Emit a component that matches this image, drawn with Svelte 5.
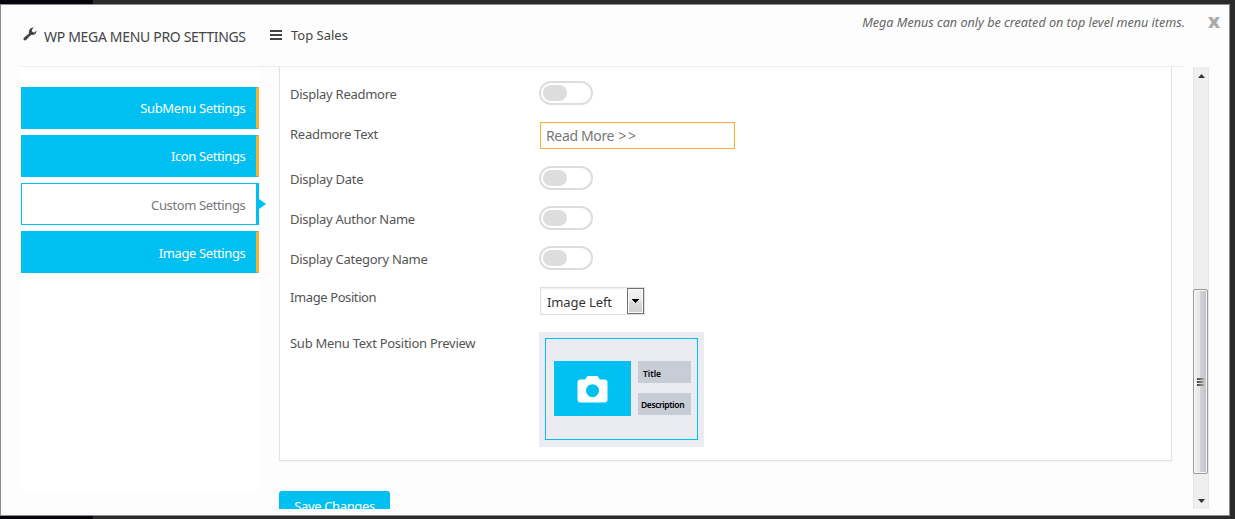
<script>
  const tabs = [
    { label: 'SubMenu Settings' },
    { label: 'Icon Settings' },
    { label: 'Custom Settings', active: true },
    { label: 'Image Settings' }
  ];
  const rows = [
    { label: 'Display Readmore', kind: 'toggle', cls: 'r41' },
    { label: 'Readmore Text', kind: 'input', cls: 'r44' },
    { label: 'Display Date', kind: 'toggle', cls: 'r40' },
    { label: 'Display Author Name', kind: 'toggle', cls: 'r40' },
    { label: 'Display Category Name', kind: 'toggle', cls: 'r41' },
    { label: 'Image Position', kind: 'choice', cls: 'r45' },
    { label: 'Sub Menu Text Position Preview', kind: 'layout', cls: 'r128' }
  ];
</script>

<div class="page">
  <div class="modal">
    <header>
      <svg class="wrench" viewBox="0 0 14 14" width="14" height="14"><path d="M.9 10.800 6 6.400C5.500 4.300 6.100 2.500 7.500 1.400 8.400.7 9.500.4 10.700.6L8.900 2.800l.4 2.100 2.100.5 2-1.900c.2 1.400-.3 2.700-1.300 3.600-1.200 1-2.700 1.200-4.200.8L3.100 13c-.6.6-1.600.6-2.200 0s-.6-1.600 0-2.200Z" fill="#444" /></svg>
      <span class="title">WP MEGA MENU PRO SETTINGS</span>
      <span class="burger"><i></i><i></i><i></i></span>
      <span class="item">Top Sales</span>
      <span class="note">Mega Menus can only be created on top level menu items.</span>
      <span class="close">x</span>
    </header>
    <div class="body">
      <nav>
        {#each tabs as t}
          <div class="tab" class:active={t.active}><span>{t.label}</span></div>
        {/each}
      </nav>
      <main>
        <section>
          {#each rows as r}
            <div class="row {r.cls}">
              <div class="label for-{r.kind}"><span>{r.label}</span></div>
              {#if r.kind === 'toggle'}
                <div class="switch"><b></b></div>
              {:else if r.kind === 'input'}
                <div class="field"><span>Read More <span class="arrows">&gt;&gt;</span></span></div>
              {:else if r.kind === 'choice'}
                <div class="select"><span>Image Left</span>
                  <div class="drop"><svg width="7" height="4" viewBox="0 0 7 4" shape-rendering="crispEdges"><path d="M0 0h7L3.500 4Z" /></svg></div>
                </div>
              {:else}
                <div class="preview">
                  <div class="frame">
                    <div class="photo">
                      <svg width="31" height="27" viewBox="0 0 31 27"><path fill="#fff" fill-rule="evenodd" d="M3.500 3.500h4.800l1.200-2.200Q10.200 0 11.500 0h8q1.300 0 2 1.300l1.200 2.200h4.800q3 0 3 3v17q0 3-3 3h-24q-3 0-3-3v-17q0-3 3-3ZM15.500 8.200a6.500 6.500 0 1 0 0 13 6.500 6.500 0 1 0 0-13Z" /></svg>
                    </div>
                    <div class="lines">
                      <div class="t"><span>Title</span></div>
                      <div class="d"><span>Description</span></div>
                    </div>
                  </div>
                </div>
              {/if}
            </div>
          {/each}
        </section>
        <button><span>Save Changes</span></button>
      </main>
      <aside>
        <svg class="up" width="7" height="4" viewBox="0 0 7 4"><path d="M0 4 3.500 0 7 4Z" fill="#333" /></svg>
        <div class="thumb"><i></i><i></i><i></i></div>
        <svg class="down" width="7" height="4" viewBox="0 0 7 4"><path d="M0 0h7L3.500 4Z" fill="#333" /></svg>
      </aside>
    </div>
  </div>
</div>

<style>
  :global(body) { margin: 0; overflow: hidden; }
  .page, .page * { box-sizing: border-box; }
  .page {
    width: 1235px; height: 519px; padding-top: 4px;
    background: linear-gradient(90deg, #04060a 93px, #2b2b2b 93px);
    font: 13px/18px "Noto Sans", "Open Sans", sans-serif; color: #555;
  }
  span { white-space: nowrap; }
  .modal {
    width: 1230px; height: 512px; border: 1px solid #8c8c8c;
    background: #fdfdfd; padding-left: 20px;
  }
  header {
    width: 1200px; height: 62px; display: flex; align-items: flex-start; color: #444;
    background: linear-gradient(#ebebeb, #ebebeb) 0 61px / 1164px 1px no-repeat;
  }
  .wrench { margin: 22px 0 0 2px; flex: none; }
  .title { width: 226px; margin: 23px 0 0 7px; font-size: 14px; letter-spacing: -.32px; }
  .burger { width: 12px; height: 10px; margin-top: 25px; display: flex; flex-direction: column; gap: 2px; }
  .burger i { height: 2px; background: #444; }
  .item { margin: 21px 0 0 9px; }
  .note { margin: 9px 0 0 auto; font-style: italic; color: #666; font-size: 12.600px; }
  .close { width: 13px; margin: 5px 0 0 23px; font-weight: 800; font-size: 20px; line-height: 22px; color: #aaa; }
  .body { height: 442px; display: flex; overflow: hidden; }
  nav { width: 238px; height: 424px; padding-top: 20px; background: #fff; display: flex; flex-direction: column; gap: 6px; flex: none; }
  .tab {
    position: relative; height: 42px; border: 1px solid #00c0f1; border-right: 3px solid #fbb034;
    background: #00c0f1; color: #fff; text-align: right; padding: 11px 10.600px 0 0; letter-spacing: -.38px;
  }
  .tab:last-child { padding-top: 12px; }
  .tab.active { background: #fff; color: #777; border-right-color: #00c0f1; padding-top: 12px; }
  .tab.active::after {
    content: ""; position: absolute; left: 100%; top: 15px; margin-left: 3px;
    border: 5px solid transparent; border-left: 7px solid #00c0f1; border-right: 0;
  }
  main { margin-left: 20px; width: 893px; flex: none; }
  section {
    height: 394px; padding: 14px 0 0 10px; background: #fff;
    border: 1px solid #e2e2e2; border-top: 0; box-shadow: 0 1px 1px rgba(0,0,0,.04);
  }
  .row { display: flex; align-items: flex-start; }
  .r40 { height: 40px; } .r41 { height: 41px; } .r44 { height: 44px; } .r45 { height: 45px; } .r128 { height: 128px; }
  .label { width: 249px; padding-top: 4px; flex: none; letter-spacing: -.27px; }
  .for-input { padding-top: 3px; }
  .for-choice { padding-top: 1px; letter-spacing: -.4px; }
  .for-layout { padding-top: 2px; }
  .switch { width: 54px; height: 24px; border: 2px solid #ddd; border-radius: 12px; padding: 2px; }
  .switch b { display: block; width: 24px; height: 16px; border-radius: 9px; background: #ddd; }
  .field { margin-left: 1px; width: 195px; height: 27px; border: 1px solid #fbb034; padding: 4px 5px; font-size: 14px; letter-spacing: -.35px; color: #777; box-shadow: inset 0 1px 2px rgba(0,0,0,.05); }
  .arrows { margin-left: 1px; letter-spacing: 1.500px; }
  .select { margin-left: 1px; width: 105px; height: 28px; border: 1px solid #ddd; display: flex; justify-content: space-between; color: #333; box-shadow: inset 0 1px 2px rgba(0,0,0,.07); background: #fff; }
  .select > span { padding: 5px 0 0 6px; letter-spacing: -.1px; }
  .drop { width: 17px; height: 26px; border: 1px solid #707070; box-shadow: inset 0 0 0 1px #fafafa; background: linear-gradient(#f2f2f2 0, #ebebeb 50%, #ddd 50%, #cfcfcf); display: flex; align-items: center; justify-content: center; }
  .preview { width: 165px; height: 115px; background: #eaecf1; padding: 6px; }
  .frame { width: 153px; height: 102px; border: 1px solid #00c0f1; display: flex; padding: 22px 0 0 8px; }
  .photo { width: 77px; height: 55px; background: #00c0f1; display: flex; align-items: center; justify-content: center; padding-top: 2px; }
  .lines { margin-left: 7px; width: 53px; display: flex; flex-direction: column; gap: 10px; color: #000; font-size: 8.500px; font-weight: 600; line-height: 12px; letter-spacing: -.4px; }
  .t, .d { height: 22px; background: #c8ccd6; padding: 6px 0 0 3px; }
  .t { padding: 7px 0 0 5px; letter-spacing: 0; }
  button { display: flex; justify-content: center; margin-top: 30px; width: 111px; height: 32px; border: 0; padding: 6px 0 0; border-radius: 3px; background: #00c0f1; color: #fff; font: inherit; letter-spacing: -.35px; }
  aside { margin-left: 21px; width: 16px; height: 442px; background: #efefef; border: 1px solid #e5e5e5; border-width: 0 1px; display: flex; flex-direction: column; align-items: center; }
  .up { margin-top: 7px; flex: none; } .down { margin-top: 25px; flex: none; }
  .thumb { margin: 211px 0 0 -1px; width: 15px; height: 185px; flex: none; border: 1px solid #999; border-radius: 2px; box-shadow: inset 0 0 0 1px #f7f7f7; background: linear-gradient(90deg, #f3f3f3, #e5e5e7 45%, #d2d2d6 50%, #c0c0c7); display: flex; flex-direction: column; align-items: center; justify-content: center; gap: 1px; }
  .thumb i { width: 7px; height: 2px; background: linear-gradient(90deg, #444, #aaa); }
</style>
